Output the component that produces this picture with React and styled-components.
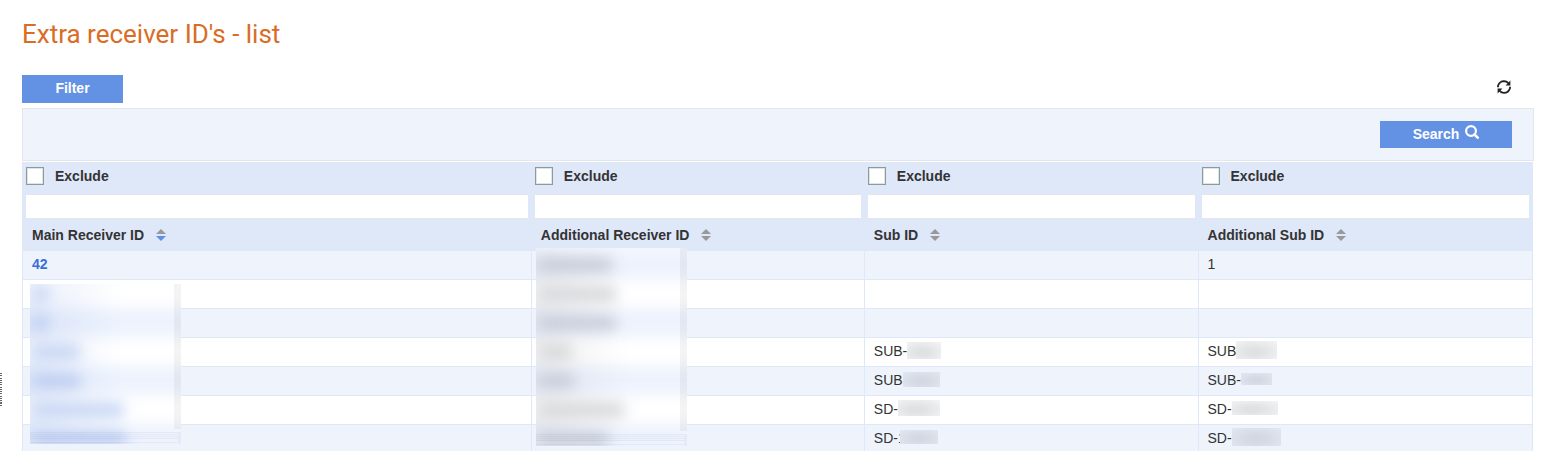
import React from "react";
import styled, { createGlobalStyle } from "styled-components";

const GlobalStyle = createGlobalStyle`
  *, *::before, *::after { box-sizing: border-box; }
  body {
    margin: 0;
    background: #fff;
    color: #333;
    font: 14px/20px "Liberation Sans", Arial, sans-serif;
  }
`;

const Page = styled.main`
  position: relative;
  height: 100vh;
  overflow: hidden;
  padding: 16px 16px 0 22px;
`;

const Title = styled.h1`
  margin: 0 0 23px;
  font: 400 26px/36px Roboto, sans-serif;
  color: #d96d26;
`;

const Toolbar = styled.div`
  display: flex;
  align-items: center;
  justify-content: space-between;
  padding-right: 23px;
  margin-bottom: 5px;
`;

const Button = styled.button`
  display: flex;
  align-items: center;
  justify-content: center;
  gap: 6px;
  width: ${(p) => p.$width}px;
  height: ${(p) => p.$height}px;
  padding: 0 0 2px;
  border: 0;
  background: #6391e4;
  color: #fff;
  font: bold 14px/20px "Liberation Sans", Arial, sans-serif;
  cursor: pointer;

  svg { margin-bottom: 4px; }
`;

const IconButton = styled.button`
  display: flex;
  padding: 0;
  border: 0;
  background: none;
  color: #222;
  cursor: pointer;
`;

const RefreshButton = styled(IconButton)`
  padding-bottom: 4px;
`;

const FilterPanel = styled.section`
  display: flex;
  justify-content: flex-end;
  padding: 12px 21px;
  margin-bottom: 1px;
  border: 1px solid #e3e6ea;
  background: #eef3fc;
`;

const TableWrap = styled.div`
  padding-right: 1px;
`;

const Table = styled.table`
  width: 100%;
  table-layout: fixed;
  border-collapse: separate;
  border-spacing: 0;
  border-left: 1px solid #dfe8f9;
`;

const Col = styled.col`
  width: ${(p) => p.$share}%;
`;

const HeadCell = styled.th`
  padding: 0 4px 0 3px;
  background: #dfe8f9;
  text-align: left;
  font-weight: bold;
`;

const ExcludeLabel = styled.label`
  display: flex;
  align-items: center;
  gap: 11px;
  height: 28px;
  margin-bottom: 4px;
`;

const Checkbox = styled.input`
  appearance: none;
  width: 18px;
  height: 18px;
  margin: 0;
  border: 1px solid #8c9a9a;
  background: #fff;
  box-shadow: inset 0 0 0 1px #dfe5e3;

  &:checked { background: #6391e4; }
`;

const FilterInput = styled.input`
  display: block;
  width: 100%;
  height: 25px;
  padding: 0 6px;
  border: 1px solid #e3e6ea;
  border-width: 1px 0;
  background: #fff;
  font: inherit;
  font-weight: normal;
`;

const ColumnTitle = styled.div`
  display: flex;
  align-items: center;
  gap: 12px;
  height: 32px;
  padding-left: 6px;
`;

const Row = styled.tr`
  background: ${(p) => (p.$tinted ? "#eef3fc" : "#fff")};
`;

const Cell = styled.td`
  position: relative;
  height: 29px;
  padding: 0 9px;
  border-right: 1px solid #dfe8f9;
  border-bottom: 1px solid #dfe8f9;
  white-space: nowrap;
`;

const CellLine = styled.div`
  display: flex;
  align-items: center;
  height: 28px;
  padding-bottom: 2px;
`;

const IdLink = styled.a`
  color: #3a6edb;
  font-weight: bold;
  text-decoration: none;
`;

const MaskChip = styled.span`
  width: ${(p) => p.$width}px;
  height: ${(p) => p.$height}px;
  margin-left: ${(p) => (p.$overlap ? -6 : 0)}px;
  margin-bottom: 2px;
  background: ${(p) =>
    p.$tinted
      ? "radial-gradient(ellipse at 50% 60%, #d4d8e3 20%, #e3e7f0 100%)"
      : "radial-gradient(ellipse at 45% 60%, #e0e1e2 20%, #f3f4f5 100%)"};
`;

const ColumnMask = styled.div`
  position: absolute;
  z-index: 1;
  left: ${(p) => p.$left}px;
  top: ${(p) => p.$top}px;
  width: ${(p) => p.$width}px;
  height: ${(p) => p.$height}px;
  overflow: hidden;
  background: #f6f9fe;

  &::before {
    content: "";
    position: absolute;
    z-index: 1;
    right: 0;
    top: 0;
    width: 7px;
    height: calc(100% - 15px);
    background: rgba(70, 70, 70, 0.06);
  }

  &::after {
    content: "";
    position: absolute;
    z-index: 1;
    inset: auto 0 0 0;
    height: 12px;
    border-right: 3px solid rgba(70, 80, 110, 0.05);
    background: repeating-linear-gradient(rgba(90, 110, 160, 0.08) 0 1px, transparent 1px 2px) 0 0 / 100% 7px no-repeat,
      linear-gradient(rgba(90, 110, 160, 0.08), rgba(90, 110, 160, 0.08)) 0 10px / 100% 1px no-repeat;
  }
`;

const MaskLines = styled.div`
  margin: ${(p) => p.$shift}px -20px 0;
  filter: blur(7px);
`;

const MaskLine = styled.div`
  display: flex;
  align-items: center;
  height: 29px;
  padding-left: 24px;
  background: ${(p) => (p.$tinted ? "#edf2fd" : "#ffffff")};
  background-image: linear-gradient(90deg, ${(p) => p.$ink}66 20px, transparent 110px);
`;

const Smudge = styled.span`
  width: ${(p) => p.$width}px;
  height: 14px;
  background: ${(p) => p.$ink};
`;

const EdgeHandle = styled.svg`
  position: absolute;
  left: 0;
  top: 373px;
`;

const RefreshIcon = () => (
  <svg width="14" height="14" viewBox="0 0 14 14" fill="none" aria-hidden="true">
    <path d="M1 7.2V5.8Q2.6 1.2 7 1.1 9.5 1.1 11.4 3.2" stroke="currentColor" strokeWidth="1.8" />
    <path d="M13 6.8V8.2Q11.4 12.8 7 12.9 4.5 12.9 2.6 10.8" stroke="currentColor" strokeWidth="1.8" />
    <path d="M13.4.6V5.4H8.6Z" fill="currentColor" />
    <path d="M.6 13.4V8.6H5.4Z" fill="currentColor" />
  </svg>
);

const SearchIcon = () => (
  <svg width="14" height="14" viewBox="0 0 14 14" fill="none" aria-hidden="true">
    <circle cx="6" cy="6" r="4.9" stroke="currentColor" strokeWidth="2.2" />
    <path d="M9.5 9.5 12.7 12.7" stroke="currentColor" strokeWidth="2.6" strokeLinecap="round" />
  </svg>
);

const SortIcon = ({ active }) => (
  <svg width="10" height="12" viewBox="0 0 10 12" aria-hidden="true">
    <path d="M5 0 10 5H0Z" fill="#999" />
    <path d="M5 12 0 7h10Z" fill={active ? "#5f8fe6" : "#999"} />
  </svg>
);

const columns = [
  { title: "Main Receiver ID", share: 33.7, sorted: true },
  { title: "Additional Receiver ID", share: 22.05 },
  { title: "Sub ID", share: 22.1 },
  { title: "Additional Sub ID", share: 22.15 },
];

const rows = [
  { id: "42", extra: { text: "1" } },
  {},
  {},
  { sub: { text: "SUB-", w: 34, h: 17 }, extra: { text: "SUB", w: 41, h: 18 } },
  { sub: { text: "SUB", w: 37, h: 15 }, extra: { text: "SUB-", w: 31, h: 12 } },
  { sub: { text: "SD-", w: 42, h: 16 }, extra: { text: "SD-", w: 46, h: 14 } },
  { sub: { text: "SD-1", w: 38, h: 14, overlap: true }, extra: { text: "SD-", w: 49, h: 18 } },
];

const mainSmudges = [14, 14, 46, 46, 90, 92];
const additionalSmudges = [72, 76, 76, 32, 34, 84, 68];

function HiddenColumn({ widths, tintFirst, ink, lightInk, ...box }) {
  return (
    <ColumnMask aria-hidden="true" {...box}>
      <MaskLines $shift={tintFirst ? 2 : -5}>
        {widths.map((width, i) => {
          const tinted = (i % 2 === 0) === tintFirst;
          const color = tinted ? ink : lightInk;
          return (
            <MaskLine key={i} $tinted={tinted} $ink={color}>
              <Smudge $width={width} $ink={color} />
            </MaskLine>
          );
        })}
      </MaskLines>
    </ColumnMask>
  );
}

function Value({ value, tinted }) {
  if (!value) return null;
  return (
    <CellLine>
      {value.text}
      {value.w && <MaskChip $width={value.w} $height={value.h} $overlap={value.overlap} $tinted={tinted} />}
    </CellLine>
  );
}

export default function App() {
  return (
    <>
      <GlobalStyle />
      <Page>
        <Title>Extra receiver ID's - list</Title>
        <Toolbar>
          <Button type="button" $width={101} $height={28}>Filter</Button>
          <RefreshButton type="button" aria-label="Refresh"><RefreshIcon /></RefreshButton>
        </Toolbar>
        <FilterPanel>
          <Button type="button" $width={132} $height={27}>Search<SearchIcon /></Button>
        </FilterPanel>
        <TableWrap>
          <Table>
            <colgroup>
              {columns.map((c) => <Col key={c.title} $share={c.share} />)}
            </colgroup>
            <thead>
              <tr>
                {columns.map((c) => (
                  <HeadCell key={c.title} scope="col">
                    <ExcludeLabel><Checkbox type="checkbox" />Exclude</ExcludeLabel>
                    <FilterInput type="text" aria-label={c.title} />
                    <ColumnTitle>
                      {c.title}
                      <IconButton type="button" aria-label={`Sort by ${c.title}`}>
                        <SortIcon active={c.sorted} />
                      </IconButton>
                    </ColumnTitle>
                  </HeadCell>
                ))}
              </tr>
            </thead>
            <tbody>
              {rows.map((row, i) => {
                const tinted = i % 2 === 0;
                return (
                  <Row key={i} $tinted={tinted}>
                    <Cell>
                      {row.id && <CellLine><IdLink href="#42">{row.id}</IdLink></CellLine>}
                      {i === 1 && (
                        <HiddenColumn
                          widths={mainSmudges} tintFirst={false}
                          ink="#bccdf1" lightInk="#c6d5f4"
                          $left={7} $top={4} $width={151} $height={160}
                        />
                      )}
                    </Cell>
                    <Cell>
                      {i === 0 && (
                        <HiddenColumn
                          widths={additionalSmudges} tintFirst
                          ink="#c8ccd8" lightInk="#d6d7d8"
                          $left={4} $top={-3} $width={151} $height={198}
                        />
                      )}
                    </Cell>
                    <Cell><Value value={row.sub} tinted={tinted} /></Cell>
                    <Cell><Value value={row.extra} tinted={tinted} /></Cell>
                  </Row>
                );
              })}
            </tbody>
          </Table>
        </TableWrap>
        <EdgeHandle width="3" height="34" viewBox="0 0 3 34" aria-hidden="true">
          {[0, 2, 5, 7, 9, 11, 14, 16, 18, 20, 23, 25, 27, 29, 30, 32].map((y) => (
            <rect key={y} y={y} width="2" height="1" fill="#666" />
          ))}
        </EdgeHandle>
      </Page>
    </>
  );
}
